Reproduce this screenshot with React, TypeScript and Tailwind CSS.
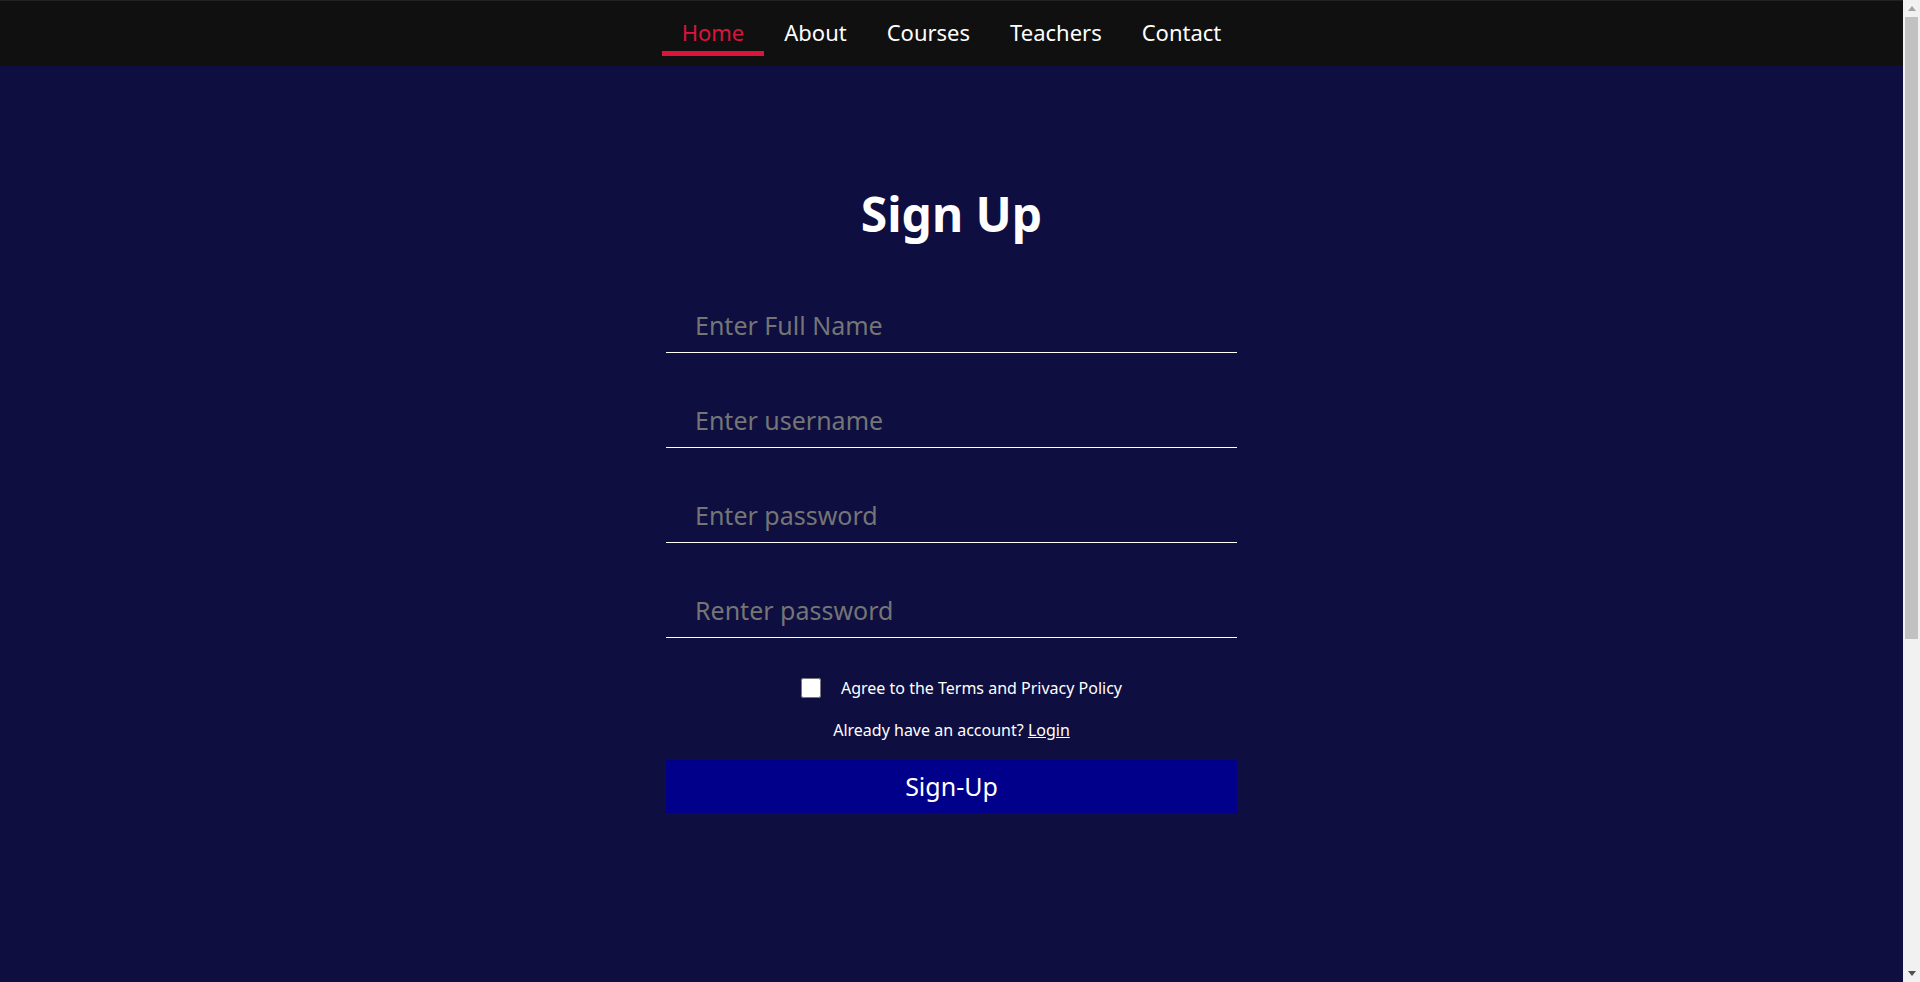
import { useState } from "react";

const links = ["Home", "About", "Courses", "Teachers", "Contact"];

function Field(props: { placeholder: string; type?: string }) {
  return (
    <input
      type={props.type ?? "text"}
      placeholder={props.placeholder}
      className="block w-[571px] bg-transparent border-0 border-b border-white px-[29px] pt-[10px] pb-[10px] text-[25px] leading-[34px] text-white placeholder:text-[#757575] outline-none"
    />
  );
}

// the browser's scrollbar, drawn so the page keeps the 1903px content width
function ScrollBar() {
  return (
    <div className="w-[17px] shrink-0 bg-[#f1f1f1] flex flex-col">
      <div className="h-[17px] flex items-center justify-center">
        <svg width="8" height="5" viewBox="0 0 8 5">
          <path d="M0 5 L4 0 L8 5 Z" fill="#a3a3a3" />
        </svg>
      </div>
      <div className="flex-1">
        <div className="mx-[2px] h-[622px] bg-[#c1c1c1]" />
      </div>
      <div className="h-[17px] flex items-center justify-center">
        <svg width="8" height="5" viewBox="0 0 8 5">
          <path d="M0 0 L8 0 L4 5 Z" fill="#505050" />
        </svg>
      </div>
    </div>
  );
}

export default function App() {
  const [active] = useState("Home");
  const [agree, setAgree] = useState(false);

  return (
    <div className="flex h-screen overflow-hidden font-['Noto_Sans',sans-serif]">
      <div className="flex-1 min-w-0 bg-[#0e0e40] overflow-hidden">
        <nav className="h-[66px] bg-[#101010] border-t border-[#222] flex justify-center">
          <ul className="flex pt-[16px]">
            {links.map((l) => (
              <li key={l}>
                <a
                  href="#"
                  className={
                    "block px-[20px] pb-[4px] border-b-[5px] text-[22px] leading-[30px] " +
                    (l === active
                      ? "text-[#dc143c] border-[#dc143c]"
                      : "text-white border-transparent")
                  }
                >
                  {l}
                </a>
              </li>
            ))}
          </ul>
        </nav>

        <main className="flex flex-col items-center pt-[115px]">
          <h1 className="text-[48px] font-bold text-white leading-[65px]">Sign Up</h1>

          <form
            className="flex flex-col items-center mt-[52px] w-full"
            onSubmit={(e) => e.preventDefault()}
          >
            <div className="flex flex-col items-center gap-[40px] w-full">
              <Field placeholder="Enter Full Name" />
              <Field placeholder="Enter username" />
              <Field placeholder="Enter password" type="password" />
              <Field placeholder="Renter password" type="password" />
            </div>

            <label className="flex items-center gap-[20px] pl-[20px] mt-[39px] text-[16px] leading-[22px] text-white">
              <input
                type="checkbox"
                checked={agree}
                onChange={(e) => setAgree(e.target.checked)}
                className="w-[20px] h-[20px] m-0"
              />
              Agree to the Terms and Privacy Policy
            </label>

            <p className="mt-[20px] text-[16px] leading-[22px] text-white">
              Already have an account?{" "}
              <a href="#" className="underline">
                Login
              </a>
            </p>

            <button
              type="submit"
              className="mt-[19px] w-[571px] h-[53px] bg-[#00008b] text-white text-[25px]"
            >
              Sign-Up
            </button>
          </form>
        </main>
      </div>
      <ScrollBar />
    </div>
  );
}
